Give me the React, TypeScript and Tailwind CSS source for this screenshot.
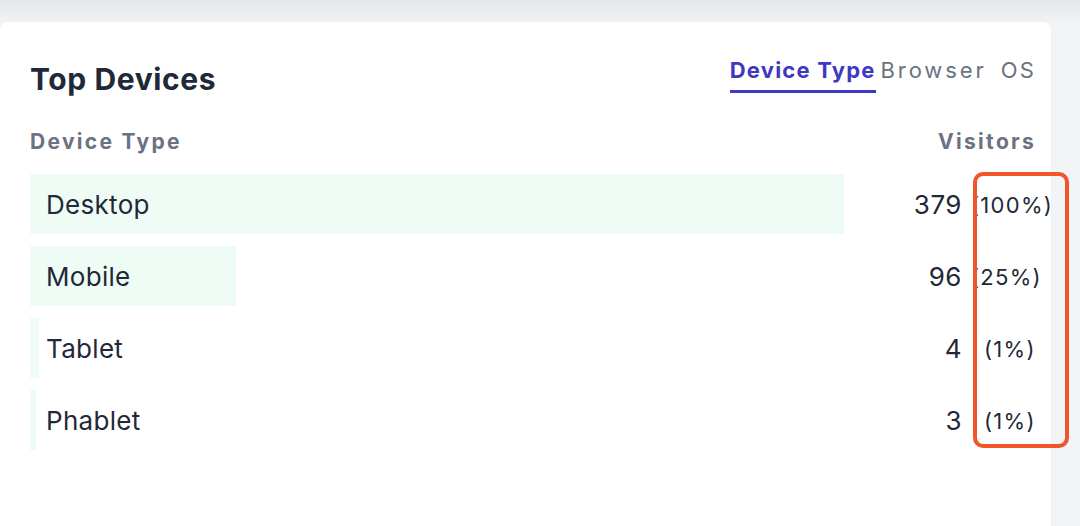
import React from "react";

const rows = [
  { name: "Desktop", count: 379, pct: "(100%)", pl: "pl-0" },
  { name: "Mobile", count: 96, pct: "(25%)", pl: "pl-0" },
  { name: "Tablet", count: 4, pct: "(1%)", pl: "pl-[13px]" },
  { name: "Phablet", count: 3, pct: "(1%)", pl: "pl-[13px]" },
];

export default function App() {
  const max = 379;
  return (
    <div
      className="relative w-[1080px] h-[526px] overflow-hidden bg-[#f3f4f6]"
      style={{ fontFamily: "Inter, 'Noto Sans', sans-serif" }}
    >
      <div className="h-[22px] bg-gradient-to-b from-[#e6e7ea] to-[#f1f2f4]" />
      <div className="w-[1051px] h-[520px] bg-white rounded-lg shadow-[0_1px_3px_rgba(0,0,0,0.04)] pl-[30px] pr-[17px] pt-[30px]">
        <div className="flex items-start justify-between">
          <h2 className="text-[30px] leading-[54px] font-bold text-[#1f2937] tracking-[0.6px]">
            Top Devices
          </h2>
          <div className="flex items-start pt-[3px] text-[22px] leading-[30px]">
            <div className="font-bold text-[#3f38c2] border-b-[3px] border-[#3f38c2] pb-[5px] tracking-[1.2px]">
              Device Type
            </div>
            <div className="ml-[5px] text-[#6b7280] tracking-[2.9px]">Browser</div>
            <div className="ml-[14px] -mr-[2px] text-[#6b7280] tracking-[2.2px]">OS</div>
          </div>
        </div>
        <div className="flex justify-between mt-[21px] text-[21px] leading-[30px] font-bold text-[#6b7280] tracking-[2.3px]">
          <span>Device Type</span>
          <span className="-mr-[2px]">Visitors</span>
        </div>
        <div className="mt-[17px] flex flex-col gap-[12px]">
          {rows.map((r) => (
            <div key={r.name} className="flex items-center h-[60px] w-[1100px]">
              <div className="relative shrink-0 w-[814px] h-[60px] flex items-center">
                <div
                  className="absolute left-0 top-0 h-full bg-[#effcf5]"
                  style={{ width: `${(r.count / max) * 100}%`, minWidth: "6px" }}
                />
                <span className="relative pl-[16px] text-[26px] text-[#1f2937] tracking-[0.3px]">
                  {r.name}
                </span>
              </div>
              <span className="shrink-0 w-[118px] text-right text-[26px] text-[#1f2937] tracking-[0.5px]">
                {r.count}
              </span>
              <span className={`${r.pl} ml-[9px] pt-[2px] shrink-0 text-[22px] text-[#1f2937] whitespace-nowrap tracking-[1.3px]`}>
                {r.pct}
              </span>
            </div>
          ))}
        </div>
      </div>
      <div className="absolute left-[973px] top-[172px] w-[96px] h-[276px] border-[4px] border-[#f0562a] rounded-[10px]" />
    </div>
  );
}
